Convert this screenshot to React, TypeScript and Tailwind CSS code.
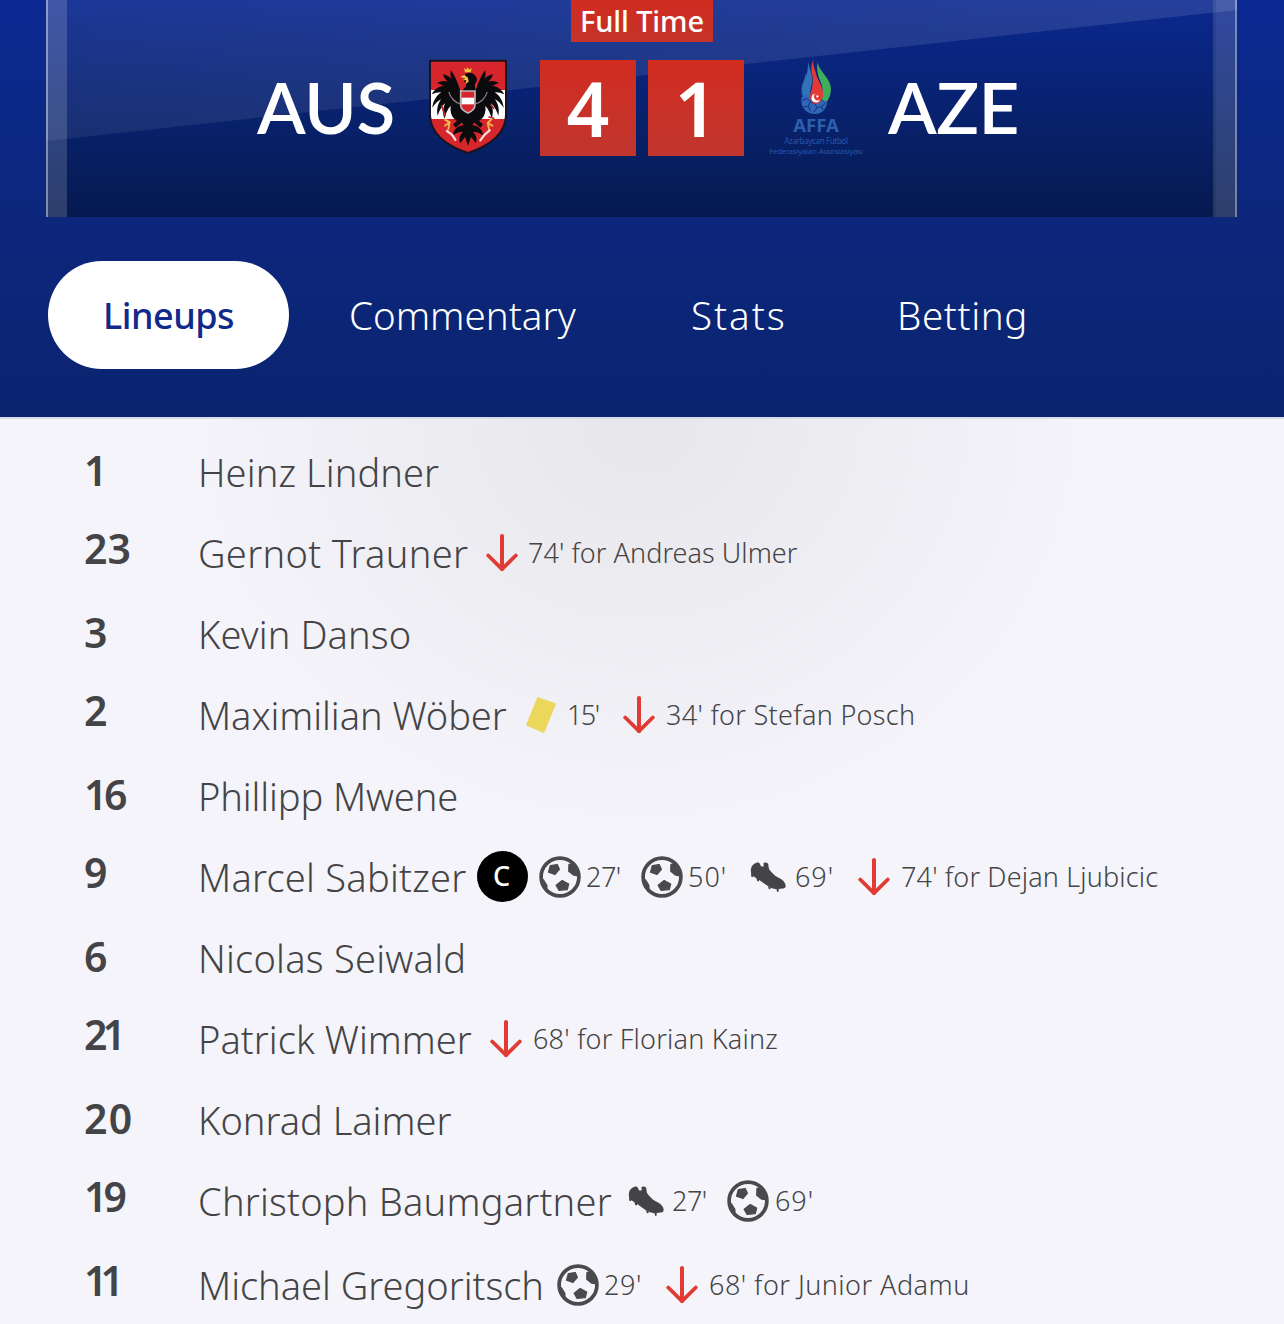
type EventKind = "sub" | "goal" | "assist" | "yellow" | "captain";

type MatchEvent = {
  kind: EventKind;
  text?: string;
  /** Space between the icon and its text, and the width the text takes. */
  textClass?: string;
};

type Player = {
  number: string;
  numberClass?: string;
  name: string;
  nameClass: string;
  events?: MatchEvent[];
};

const players: Player[] = [
  { number: "1", name: "Heinz Lindner", nameClass: "tracking-[0.1px]" },
  {
    number: "23",
    name: "Gernot Trauner",
    nameClass: "w-[288px] tracking-[0.35px]",
    events: [{ kind: "sub", text: "74' for Andreas Ulmer", textClass: "ml-[10px] tracking-[0.05px]" }],
  },
  { number: "3", name: "Kevin Danso", nameClass: "tracking-[0.1px]" },
  {
    number: "2",
    name: "Maximilian Wöber",
    nameClass: "w-[327px] tracking-[-0.05px]",
    events: [
      { kind: "yellow", text: "15'", textClass: "ml-[10px] w-[56px] tracking-[-1.6px]" },
      { kind: "sub", text: "34' for Stefan Posch", textClass: "ml-[11px] tracking-[0.3px]" },
    ],
  },
  { number: "16", numberClass: "tracking-[-3.5px]", name: "Phillipp Mwene", nameClass: "tracking-[-0.1px]" },
  {
    number: "9",
    name: "Marcel Sabitzer",
    nameClass: "w-[279px] tracking-[0.25px]",
    events: [
      { kind: "captain" },
      { kind: "goal", text: "27'", textClass: "ml-[5px] w-[55px] tracking-[-0.5px]" },
      { kind: "goal", text: "50'", textClass: "ml-[5px] w-[62px] tracking-[1px]" },
      { kind: "assist", text: "69'", textClass: "ml-[9px] w-[63px] tracking-[0.9px]" },
      { kind: "sub", text: "74' for Dejan Ljubicic", textClass: "ml-[11px] tracking-[0.15px]" },
    ],
  },
  { number: "6", name: "Nicolas Seiwald", nameClass: "tracking-[0.25px]" },
  {
    number: "21",
    numberClass: "tracking-[-5px]",
    name: "Patrick Wimmer",
    nameClass: "w-[292px] tracking-[0.05px]",
    events: [{ kind: "sub", text: "68' for Florian Kainz", textClass: "ml-[11px] tracking-[0.2px]" }],
  },
  { number: "20", numberClass: "tracking-[1.2px]", name: "Konrad Laimer", nameClass: "tracking-[0px]" },
  {
    number: "19",
    numberClass: "tracking-[-4px]",
    name: "Christoph Baumgartner",
    nameClass: "w-[430px] tracking-[0.22px]",
    events: [
      { kind: "assist", text: "27'", textClass: "ml-[8px] w-[55px] tracking-[-0.5px]" },
      { kind: "goal", text: "69'", textClass: "ml-[6px] tracking-[0.9px]" },
    ],
  },
  {
    number: "11",
    numberClass: "tracking-[-7px]",
    name: "Michael Gregoritsch",
    nameClass: "w-[359px] tracking-[0px]",
    events: [
      { kind: "goal", text: "29'", textClass: "ml-[5px] w-[62px] tracking-[0.6px]" },
      { kind: "sub", text: "68' for Junior Adamu", textClass: "ml-[11px] tracking-[0.47px]" },
    ],
  },
];

function SubOffIcon() {
  return (
    <svg className="h-[38px] w-[32px] shrink-0" viewBox="0 0 32 38" fill="none" stroke="#e03c34" strokeWidth="4">
      <path d="M16 2V35" strokeLinecap="round" />
      <path d="M2.2 21.5L16 35.2L29.8 21.5" strokeLinecap="round" strokeLinejoin="round" strokeWidth="3.8" />
    </svg>
  );
}

function GoalIcon() {
  return (
    <svg className="h-[42px] w-[42px] shrink-0" viewBox="0 0 42 42" fill="#4a4a4c">
      <defs>
        <clipPath id="ball">
          <circle cx="21" cy="21" r="20" />
        </clipPath>
      </defs>
      <g clipPath="url(#ball)" stroke="#4a4a4c" strokeWidth="1.4" strokeLinejoin="round">
        <path d="M11.4 9.6L18.2 8.6L20.3 13.4L16 18.4L9.6 16.2Z" />
        <path d="M30 8.5L38 8L41 20L34.5 19L29.8 15.2Z" />
        <path d="M23.2 24.6L29.6 28L28.2 33.6L20 34.2L17.2 29.2Z" />
        <path d="M0 22.5L4.5 24L7.8 29.4L7.8 35.5L3 35Z" />
      </g>
      <circle cx="21" cy="21" r="18.9" fill="none" stroke="#4a4a4c" strokeWidth="3.7" />
    </svg>
  );
}

function BootIcon() {
  return (
    <svg className="h-[32px] w-[36px] shrink-0" viewBox="0 0 36 32" fill="#444446">
      <path d="M0.8 8.6C1.4 5 3.4 2.6 7.2 1.6C8.8 1.3 9.6 2 10 3.2L11 5.2C12 5.8 13 5.6 13.8 5L13.4 2.2C14.4 1.2 16.6 1.2 18.2 2.8C18.6 5 18.4 7.4 19.8 9.2C21.8 11.8 24.2 14 26.8 15.8C29.4 17.4 31.8 18.2 33.4 20C35 21.8 35.9 24 35.6 25.4C35.3 26.8 34 27.3 32.4 27.5L28.8 27.9L28.4 31L27 30.8L26.6 28.2C24.2 28 22.2 27.6 20.2 26.6C17 24.8 14.4 22.8 11.6 20.8L8.6 18.6C6.6 17.2 4.8 16 3.4 15.2L2.4 16.2L1 15.2C1.6 13 0.6 11 0.8 8.6Z" />
      <path d="M6.4 16.4L9.6 18.6L8.6 20.6L7 19.8ZM18 25.2L20.8 26.8L20.2 28.4L18.6 27.8Z" />
    </svg>
  );
}

function YellowCardIcon() {
  return (
    <svg className="h-[38px] w-[32px] shrink-0" viewBox="0 0 32 38">
      <path d="M13 2L30 8L18.6 36L2 28.8Z" fill="#ead75c" stroke="#ead75c" strokeWidth="1.8" strokeLinejoin="round" />
    </svg>
  );
}

function CaptainBadge() {
  return (
    <span className="mr-[11px] -mt-px flex size-[51px] shrink-0 items-center justify-center rounded-full bg-black pr-[2px] font-['Noto_Sans'] text-[27px] font-medium text-white">
      C
    </span>
  );
}

function EventIcon({ kind }: { kind: EventKind }) {
  if (kind === "sub") return <SubOffIcon />;
  if (kind === "goal") return <GoalIcon />;
  if (kind === "assist") return <BootIcon />;
  if (kind === "yellow") return <YellowCardIcon />;
  return <CaptainBadge />;
}

function AustriaCrest() {
  return (
    <svg className="h-[104px] w-[86px] shrink-0" viewBox="0 0 258 312">
      <defs>
        <clipPath id="shield">
          <path d="M15 17H243V180C242 232 200 270 129 294C58 270 16 232 15 180Z" />
        </clipPath>
      </defs>
      <g clipPath="url(#shield)">
        <path fill="#d6262b" d="M0 0H258V312H0Z" />
        <path fill="#fff" d="M0 105H258V192H0Z" />
      </g>
      <g fill="#0b0a0c">
        <path d="M108 112C98 84 92 66 78 46C75 56 76 64 80 72C72 64 62 59 54 58C56 67 62 74 68 80C58 76 46 78 36 84C43 86 50 89 56 93C40 94 28 104 20 118C32 113 40 111 49 112C34 122 24 138 22 158C31 145 38 138 48 133C38 148 34 164 38 182C44 164 51 153 60 145C53 162 53 176 58 192C62 174 68 162 77 152C75 168 78 180 86 190L96 198L84 208L92 218L108 205L120 190V110Z" />
        <path d="M150 112C160 84 166 66 180 46C183 56 182 64 178 72C186 64 196 59 204 58C202 67 196 74 190 80C200 76 212 78 222 84C215 86 208 89 202 93C218 94 230 104 238 118C226 113 218 111 209 112C224 122 234 138 236 158C227 145 220 138 210 133C220 148 224 164 220 182C214 164 207 153 198 145C205 162 205 176 200 192C196 174 190 162 181 152C183 168 180 180 172 190L162 198L174 208L166 218L150 205L138 190V110Z" />
        <path d="M120 58C128 50 142 52 149 60C156 66 158 76 153 82C148 88 148 98 154 108V190C150 200 146 206 142 210C158 212 174 224 174 242C164 232 152 230 144 230C154 240 158 254 152 264L138 246L129 272L120 246L106 264C100 254 104 240 114 230C106 230 94 232 84 242C84 224 100 212 116 210C112 206 108 200 104 190V110C118 104 124 96 124 84L116 78Z" />
      </g>
      <path fill="#f3c63d" d="M117 38L124 44L128 37L133 44L140 38L137 52H120ZM106 66L118 60L129 68L131 80L122 86L124 76L114 76L120 70Z" />
      <path fill="#d6262b" stroke="#b9b6b8" strokeWidth="5" d="M107 108H150V150C150 163 140 169 129 174C117 169 107 163 107 150Z" />
      <path fill="#fff" d="M110 128H147V148H110Z" />
      <g fill="none" strokeLinecap="round">
        <path stroke="#8a858a" strokeWidth="3.5" d="M104 146C90 142 76 128 72 112M153 146C168 142 182 128 186 112" />
        <path stroke="#b8262b" strokeWidth="5" d="M50 152L60 182M198 150L206 160M192 186L206 190" />
        <path stroke="#f0b84c" strokeWidth="5.5" d="M60 194L74 202L70 222M74 202L60 212M200 192L188 204L192 222M188 204L202 212" />
        <path stroke="#f7dcd9" strokeWidth="7" strokeDasharray="5 3" d="M66 228L82 240L92 256M194 226L178 240L166 256" />
      </g>
      <path fill="none" stroke="#19131f" strokeWidth="6" d="M15 17H243V180C242 232 200 270 129 294C58 270 16 232 15 180Z" />
    </svg>
  );
}

function AzerbaijanCrest() {
  return (
    <div className="flex w-[96px] shrink-0 flex-col items-center font-['Noto_Sans'] text-[#2d5fae]">
      <svg className="-mt-[2px] h-[57px] w-[32px]" viewBox="135 30 96 172">
        <path fill="#3273b8" d="M160 42C163 62 172 76 172 96C172 116 162 128 166 146L150 156C138 136 142 112 150 94C158 74 158 60 160 42Z" />
        <path fill="#3273b8" d="M150 74C154 94 136 106 139 132C140 144 144 150 150 156L166 140C154 126 166 104 150 74Z" opacity="0.75" />
        <path fill="#3fae5a" d="M188 42C190 62 206 74 218 94C232 114 232 140 214 164L196 152C206 136 204 118 196 100C188 82 184 64 188 42Z" />
        <path fill="#2f66b8" d="M139 150C150 136 166 142 172 152L200 158L217 160C216 184 202 199 180 199C154 199 136 180 139 150Z" />
        <path fill="none" stroke="#142f7c" strokeWidth="3" d="M142 158L156 152L166 162L160 176L146 178M166 162L180 168L186 180L176 194M160 176L166 190M186 180L200 176L212 166M200 176L204 188" />
        <path fill="#e23a36" d="M178 32C170 44 178 56 182 74C186 94 202 112 204 134C205 154 196 168 182 168C168 167 163 154 166 138C171 120 176 104 172 82C168 64 166 48 178 32Z" />
        <path fill="#fff" d="M181 138A13 13 0 1 0 195 155A9.5 9.5 0 1 1 181 138Z" />
        <circle cx="187" cy="146" r="3.5" fill="#fff" />
      </svg>
      <div className="text-[18.5px] leading-[20px] font-bold">AFFA</div>
      <div className="text-[8px] leading-[11px] tracking-[-0.35px] whitespace-nowrap text-[#2857a8]">Azarbaycan Futbol</div>
      <div className="text-[7.5px] leading-[10px] tracking-[-0.1px] whitespace-nowrap text-[#2857a8]">
        Federasiyaları Assosiasiyası
      </div>
    </div>
  );
}

function ScoreBox({ value }: { value: string }) {
  return (
    <div className="flex size-24 items-center justify-center bg-linear-to-b from-[#d22c1f] to-[#c0352e] font-['Noto_Sans'] text-[75px] leading-none font-semibold">
      {value}
    </div>
  );
}

function Scoreboard() {
  return (
    <section className="relative ml-[46px] h-[217px] w-[1191px] bg-linear-to-b from-[#0b2890] via-[#08226f] to-[#061a50] text-white">
      <div className="absolute inset-0 bg-linear-to-r from-white/7 to-white/11 [clip-path:polygon(0_0,100%_0,100%_10px,0_141px)]" />
      <div className="absolute inset-y-0 left-0 w-[21px] border-l-2 border-white/40 bg-white/16" />
      <div className="absolute inset-y-0 right-0 w-[24px] border-r-2 border-l-3 border-r-white/35 border-l-black/10 bg-white/16" />
      <div className="relative flex flex-col">
        <div className="ml-[525px] flex h-[42px] w-[142px] items-center justify-center bg-linear-to-b from-[#d02b20] to-[#c53328] font-['Noto_Sans'] text-[29px] font-medium tracking-[-0.1px]">
          Full Time
        </div>
        <div className="mt-[13px] flex h-[104px] items-start">
          <div className="ml-[211px] w-[168px] font-[Lato] text-[71px] leading-[104px] font-semibold tracking-[-0.3px]">AUS</div>
          <AustriaCrest />
          <div className="mt-[5px] ml-[29px] flex gap-3">
            <ScoreBox value="4" />
            <ScoreBox value="1" />
          </div>
          <div className="mt-[5px] ml-[24px]">
            <AzerbaijanCrest />
          </div>
          <div className="ml-[24px] font-[Lato] text-[71px] leading-[104px] font-semibold tracking-[-0.6px]">AZE</div>
        </div>
      </div>
    </section>
  );
}

function Tabs() {
  return (
    <nav className="mt-[44px] flex h-[108px] items-center pl-12 font-['Noto_Sans'] text-[38.5px] font-[350] text-white">
      <button className="flex h-full w-[241px] items-center justify-center rounded-full bg-white pt-px text-[36px] font-medium tracking-[-0.5px] text-[#12298c]">
        Lineups
      </button>
      <button className="ml-[60px] w-[342px] pt-px text-left tracking-[0px]">Commentary</button>
      <button className="w-[206px] pt-px text-left tracking-[2px]">Stats</button>
      <button className="pt-px tracking-[0.6px]">Betting</button>
    </nav>
  );
}

function PlayerRow({ player }: { player: Player }) {
  const tall = player.events !== undefined;
  return (
    <li className={tall ? "flex h-[84px]" : "flex h-[78px]"}>
      <span className={`w-[114px] text-[41px] leading-[74px] font-semibold ${player.numberClass ?? ""}`}>
        {player.number}
      </span>
      <div className="flex items-center whitespace-nowrap">
        <span className={`text-[38px] font-[350] ${player.nameClass}`}>{player.name}</span>
        {player.events?.map((event, i) => (
          <span key={i} className="flex items-center">
            <EventIcon kind={event.kind} />
            {event.text && <span className={`text-[27px] font-[350] ${event.textClass}`}>{event.text}</span>}
          </span>
        ))}
      </div>
    </li>
  );
}

export default function App() {
  return (
    <div className="flex h-[1324px] w-[1284px] flex-col overflow-hidden bg-[#f4f4fa]">
      <header className="h-[417px] shrink-0 bg-linear-to-b from-[#0b2992] via-[#0c277d] to-[#0b2470]">
        <Scoreboard />
        <Tabs />
      </header>
      <main className="grow border-t-2 border-[#d9dbea] bg-[radial-gradient(ellipse_460px_420px_at_640px_0,#e7e6eb,#f4f4fa)] pt-[14px]">
        <ul className="pl-[84px] font-['Noto_Sans'] text-[#444446]">
          {players.map((player) => (
            <PlayerRow key={player.number} player={player} />
          ))}
        </ul>
      </main>
    </div>
  );
}
